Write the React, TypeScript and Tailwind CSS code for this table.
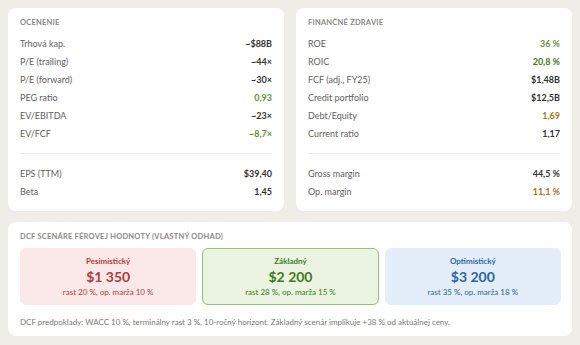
import React from 'react';

type Row = { label: string; value: string; tone?: 'good' | 'good2' | 'warn' };

const valuation: Row[][] = [
  [
    { label: 'Trhová kap.', value: '~$88B' },
    { label: 'P/E (trailing)', value: '~44×' },
    { label: 'P/E (forward)', value: '~30×' },
    { label: 'PEG ratio', value: '0,93', tone: 'good' },
    { label: 'EV/EBITDA', value: '~23×' },
    { label: 'EV/FCF', value: '~8,7×', tone: 'good' },
  ],
  [
    { label: 'EPS (TTM)', value: '$39,40' },
    { label: 'Beta', value: '1,45' },
  ],
];

const health: Row[][] = [
  [
    { label: 'ROE', value: '36 %', tone: 'good' },
    { label: 'ROIC', value: '20,8 %', tone: 'good2' },
    { label: 'FCF (adj., FY25)', value: '$1,48B' },
    { label: 'Credit portfolio', value: '$12,5B' },
    { label: 'Debt/Equity', value: '1,69', tone: 'warn' },
    { label: 'Current ratio', value: '1,17' },
  ],
  [
    { label: 'Gross margin', value: '44,5 %' },
    { label: 'Op. margin', value: '11,1 %', tone: 'warn' },
  ],
];

const toneClass = (tone?: Row['tone']) => {
  if (tone === 'good') return 'text-[#5f9435]';
  if (tone === 'good2') return 'text-[#3f7a22]';
  if (tone === 'warn') return 'text-[#a8741c]';
  return 'text-[#333331]';
};

const MetricCard = ({ title, groups }: { title: string; groups: Row[][] }) => (
  <div className="bg-white rounded-[8px] px-[12px] pt-[9px] pb-[10px]">
    <h2 className="text-[7.5px] leading-[12px] tracking-[0.03em] font-bold text-[#8a8a86] uppercase mb-[6px]">
      {title}
    </h2>
    {groups.map((group, gi) => (
      <div key={gi}>
        {gi > 0 && <div className="h-px bg-[#efeeea] mt-[10px] mb-[11px]" />}
        {group.map((row) => (
          <div key={row.label} className="flex justify-between items-center h-[18px] text-[9px]">
            <span className="text-[#62625e]">{row.label}</span>
            <span className={`font-bold ${toneClass(row.tone)}`}>{row.value}</span>
          </div>
        ))}
      </div>
    ))}
  </div>
);

const scenarios = [
  {
    name: 'Pesimistický',
    price: '$1 350',
    note: 'rast 20 %, op. marža 10 %',
    box: 'bg-[#fbe9e9] border-[#fbe9e9]',
    text: 'text-[#b23b3b]',
  },
  {
    name: 'Základný',
    price: '$2 200',
    note: 'rast 28 %, op. marža 15 %',
    box: 'bg-[#eaf4e1] border-[#93c274]',
    text: 'text-[#3f7a22]',
  },
  {
    name: 'Optimistický',
    price: '$3 200',
    note: 'rast 35 %, op. marža 18 %',
    box: 'bg-[#e4eefa] border-[#e4eefa]',
    text: 'text-[#2c64a8]',
  },
];

export default function App() {
  return (
    <div
      className="w-[580px] h-[345px] bg-[#eeede8] p-[8px] flex flex-col gap-[11px]"
      style={{ fontFamily: 'Lato, "Open Sans", sans-serif' }}
    >
      <div className="grid grid-cols-2 gap-[12px]">
        <MetricCard title="Ocenenie" groups={valuation} />
        <MetricCard title="Finančné zdravie" groups={health} />
      </div>

      <div className="bg-white rounded-[8px] pl-[12px] pr-[11px] pt-[9px] pb-[8px]">
        <h2 className="text-[7.5px] leading-[12px] tracking-[0.03em] font-bold text-[#8a8a86] uppercase mb-[5px]">
          DCF scenáre férovej hodnoty (vlastný odhad)
        </h2>
        <div className="grid grid-cols-3 gap-[6px]">
          {scenarios.map((s) => (
            <div
              key={s.name}
              className={`rounded-[6px] border h-[57px] flex flex-col items-center pt-[7px] ${s.box} ${s.text}`}
            >
              <div className="text-[8px] leading-[10px] font-bold">{s.name}</div>
              <div className="text-[14px] leading-[20px] font-bold mt-[1px]">{s.price}</div>
              <div className="text-[8px] leading-[10px]">{s.note}</div>
            </div>
          ))}
        </div>
        <p className="text-[8px] leading-[12px] text-[#7a7a76] mt-[11px]">
          DCF predpoklady: WACC 10 %, terminálny rast 3 %, 10-ročný horizont. Základný scenár implikuje +38 % od aktuálnej ceny.
        </p>
      </div>
    </div>
  );
}
